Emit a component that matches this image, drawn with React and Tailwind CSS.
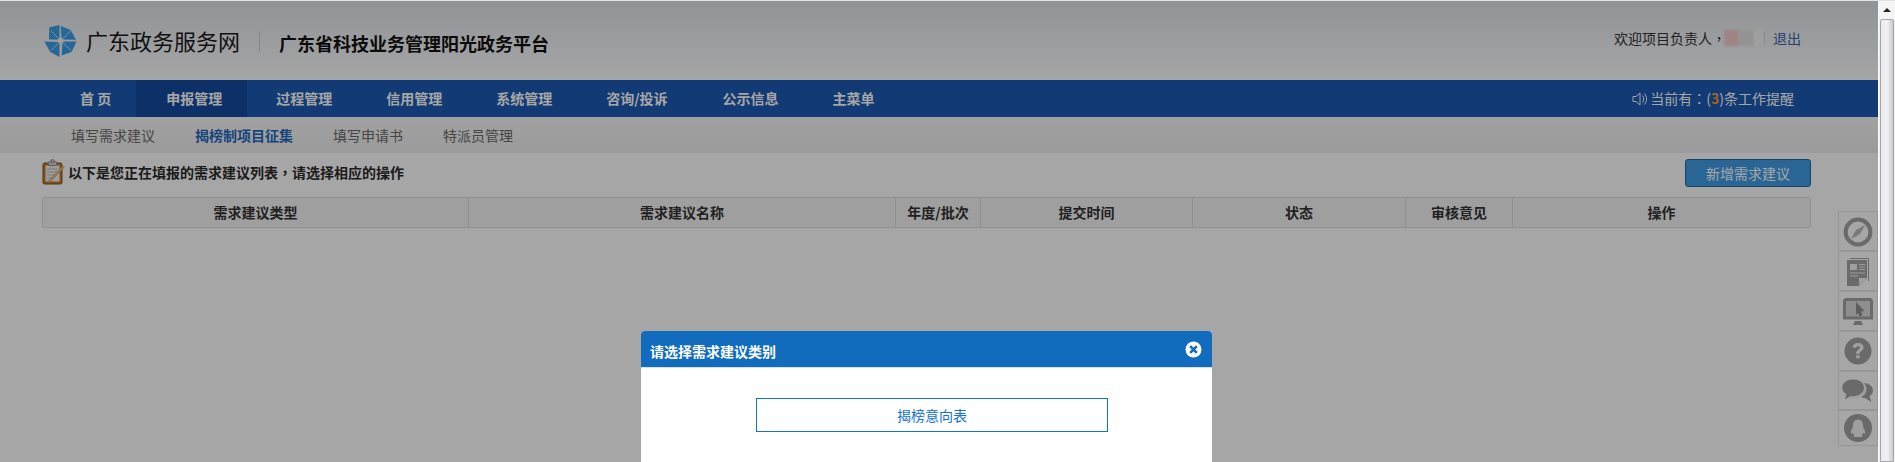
import React from "react";

const FONT = { fontFamily: '"Noto Sans CJK SC", "Liberation Sans", sans-serif' };
const PUNCT = { fontFamily: '"Noto Sans CJK TC", "Noto Sans CJK SC", sans-serif' };

const NAV = [
  { label: "首 页", cls: "pl-[29px] pr-[25px]" },
  { label: "申报管理", cls: "pl-[30px] pr-[25px] bg-[#134a9e]" },
  { label: "过程管理", cls: "pl-[29px] pr-[24px]" },
  { label: "信用管理", cls: "pl-[30px] pr-[24px]" },
  { label: "系统管理", cls: "pl-[30px] pr-[24px]" },
  { label: "咨询/投诉", cls: "pl-[30px] pr-[25px]" },
  { label: "公示信息", cls: "pl-[30px] pr-[24px]" },
  { label: "主菜单", cls: "pl-[30px] pr-[24px]" },
];

const COLS = [
  ["需求建议类型", "w-[426px]"],
  ["需求建议名称", "w-[427px]"],
  ["年度/批次", "w-[85px]"],
  ["提交时间", "w-[212px]"],
  ["状态", "w-[213px]"],
  ["审核意见", "w-[107px]"],
  ["操作", "flex-1"],
];

function Logo() {
  return (
    <svg width="34" height="34" viewBox="0 0 34 34" className="shrink-0">
      <path d="M5.3 3.3 L15.5 1 L15.5 15.6 L5 15.6Z" fill="#3c9ee6" />
      <path d="M16.7 2 L26.7 6 L32 15.8 L17.7 15.4Z" fill="#3c9ee6" />
      <path d="M18.5 17.6 L32.5 17.6 L27.7 27.7 L17.7 31.5Z" fill="#3c9ee6" />
      <path d="M15.5 18 L15.5 33 L6 27.7 L0.5 17.6Z" fill="#3c9ee6" />
      <path d="M7 7 L27 26.5 M26.5 7 L7 26.5" stroke="#fff" strokeOpacity="0.7" strokeWidth="1" fill="none" />
      <circle cx="16.6" cy="16.6" r="2.8" fill="#f0f4f8" />
    </svg>
  );
}

function Clipboard() {
  return (
    <svg width="24" height="26" viewBox="0 0 24 26" className="shrink-0 self-start">
      <rect x="1" y="4" width="19" height="21" rx="1.5" fill="#c07a30" stroke="#8a5318" />
      <rect x="3.5" y="6.5" width="14" height="16" fill="#f1f1ee" />
      <path d="M5 10h11M5 13h11M5 16h9M5 19h7" stroke="#bcbcbc" />
      <rect x="6.5" y="2.5" width="8" height="4" rx="1" fill="#cfcfcf" stroke="#8e8e8e" />
      <circle cx="10.5" cy="2" r="1.5" fill="#cfcfcf" stroke="#8e8e8e" />
      <path d="M22 8.5 L8 23 L6 24 L7 21.5 L20.5 7.5Z" fill="#ecc488" stroke="#b58443" strokeWidth="0.6" />
      <path d="M20.5 7.5 L22 8.5 L23 7.5 L22 6Z" fill="#d0d0d0" />
    </svg>
  );
}

const G = "#a3a3a3";
const S = "#f4f4f4";

function Compass() {
  return (
    <svg width="30" height="30" viewBox="0 0 30 30" className="mt-[1px]">
      <circle cx="15" cy="15" r="12.4" fill="none" stroke={G} strokeWidth="4" />
      <path d="M22 8 L17 17 L8 22 L13 13Z" fill={G} fillOpacity="0.75" />
    </svg>
  );
}
function Doc() {
  return (
    <svg width="24" height="30" viewBox="0 0 24 30" className="mt-[1px]">
      <path d="M4 1.5 H22.5 V24" fill="none" stroke={G} strokeWidth="1" />
      <path d="M1 3 H21 V21 L13 29 H1Z" fill={G} />
      <path d="M21 21 L13 29 V21Z" fill={S} />
      <rect x="4" y="7" width="7" height="6" fill={S} />
      <path d="M13 7.5h6M13 10h6M13 12.5h6M4 16h15M4 19h8" stroke={S} strokeWidth="1.2" />
    </svg>
  );
}
function Monitor() {
  return (
    <svg width="30" height="30" viewBox="0 0 30 30" className="mt-[3px]">
      <path d="M3.5 1.5 H26.5 Q28.5 1.5 28.5 3.5 V20 H1.5 V3.5 Q1.5 1.5 3.5 1.5Z" fill="#dadada" stroke={G} strokeWidth="3" />
      <path d="M12 23 H18 L20 27 H10Z" fill={G} />
      <path d="M13 4 L21.5 13 L18 13.5 L19.5 17 L16.5 18.5 L15 15 L13 17Z" fill="#8f8f8f" />
    </svg>
  );
}
function Question() {
  return (
    <svg width="28" height="28" viewBox="0 0 28 28">
      <circle cx="14" cy="14" r="13.5" fill={G} />
      <path d="M8.5 10.6 C8.8 7.4 11 6 14 6 C17.4 6 19.6 7.9 19.6 10.4 C19.6 12.6 18.1 13.6 16.9 14.4 C15.9 15.1 15.6 15.6 15.6 17 H12.2 C12.1 14.8 12.8 13.7 14.1 12.7 C15.2 11.9 15.9 11.4 15.9 10.6 C15.9 9.7 15.2 9.2 14 9.2 C12.8 9.2 12.1 9.9 12 11Z" fill={S} />
      <rect x="12.2" y="18.2" width="3.4" height="3.2" fill={S} />
    </svg>
  );
}
function Chat() {
  return (
    <svg width="32" height="25" viewBox="0 0 32 25" className="mt-[1px]">
      <path d="M21 4 C27 4 31 7.5 31 11.5 C31 14 29.6 16 27.5 17.3 L29.5 23 L22.5 18.8 Q21.5 19 20 19Z" fill={G} />
      <ellipse cx="12" cy="10" rx="12.5" ry="10" fill={S} />
      <path d="M11 0.5 C17 0.5 22 4 22 8.8 C22 13.6 17 17.2 11 17.2 Q9.5 17.2 8.5 17 L3 20.5 L4.5 15 C2 13.6 0.2 11.4 0.2 8.8 C0.2 4 5 0.5 11 0.5Z" fill={G} />
    </svg>
  );
}
function Penguin() {
  return (
    <svg width="28" height="28" viewBox="0 0 28 28">
      <circle cx="14" cy="14" r="14" fill={G} />
      <path d="M14 5.5 C17.5 5.5 19 8.5 19 11.5 C19 13 19.8 14 20.8 16.5 C21.6 18.6 21 20.2 20 19.8 L19.2 18.8 C18.9 20 18.2 20.8 17.6 21.4 C18.6 21.8 18.8 22.6 18 22.9 H10 C9.2 22.6 9.4 21.8 10.4 21.4 C9.8 20.8 9.1 20 8.8 18.8 L8 19.8 C7 20.2 6.4 18.6 7.2 16.5 C8.2 14 9 13 9 11.5 C9 8.5 10.5 5.5 14 5.5Z" fill={S} />
    </svg>
  );
}

function ToolBox({ children, cls }) {
  return (
    <div className={`flex items-center justify-center border border-[#e6e6e6] w-[40px] ${cls}`}>
      {children}
    </div>
  );
}

export default function App() {
  return (
    <div className="relative flex h-[462px] w-[1895px] overflow-hidden bg-white" style={FONT}>
      <div className="relative w-[1878px] shrink-0 text-[14px]">
        {/* header */}
        <div className="flex h-[80px] items-start bg-gradient-to-b from-[#dde2e8] to-white pl-[44px]">
          <div className="mt-[24px]"><Logo /></div>
          <div className="ml-[8px] mt-[22px] text-[22px] leading-[36px] text-[#1a1a1a]">广东政务服务网</div>
          <div className="ml-[19px] mt-[31px] h-[21px] w-px bg-[#d0d0d0]" />
          <div className="ml-[19px] mt-[29px] text-[18px] font-bold leading-[28px] text-[#111]">广东省科技业务管理阳光政务平台</div>
          <div className="ml-auto mr-[77px] mt-[27px] flex items-center leading-[22px] text-[#333]">
            <span>欢迎项目负责人<span style={PUNCT}>，</span></span>
            <span className="ml-[-2px] h-[16px] w-[15px] bg-[#f6cccc] blur-[1px]" />
            <span className="h-[16px] w-[15px] bg-[#e2e2e2] blur-[1px]" />
            <span className="h-[16px] w-[9px] bg-[#f4f4f4] blur-[1px]" />
            <span className="ml-[1px] h-[12px] w-px bg-[#cfcfcf]" />
            <span className="ml-[8px] text-[#3c64b0]">退出</span>
          </div>
        </div>

        {/* nav */}
        <div className="flex h-[37px] items-stretch bg-[#1c59b2] pl-[51px] leading-[37px] text-white">
          {NAV.map((n) => (
            <div key={n.label} className={`font-bold ${n.cls}`}>
              {n.label}
            </div>
          ))}
          <div className="ml-auto mr-[84px] flex items-center">
            <svg width="16" height="16" viewBox="0 0 16 16" className="mr-[2px]">
              <path d="M1 5.5h3l4-3.5v12l-4-3.5H1Z" fill="none" stroke="#fff" />
              <path d="M10.5 4.5c1.6 2 1.6 5 0 7M12.5 2.5c2.7 3.2 2.7 7.8 0 11" fill="none" stroke="#fff" />
            </svg>
            <span>当前有<span style={PUNCT}>：</span>(<span className="font-bold text-[#ff9428]">3</span>)条工作提醒</span>
          </div>
        </div>

        {/* subnav */}
        <div className="flex h-[36px] items-center bg-gradient-to-b from-[#f8f8f8] to-[#eeeeee] pl-[71px] text-[#6a6a6a]">
          <span>填写需求建议</span>
          <span className="ml-[40px] font-bold text-[#2468c0]">揭榜制项目征集</span>
          <span className="ml-[40px]">填写申请书</span>
          <span className="ml-[40px]">特派员管理</span>
        </div>

        {/* content */}
        <div className="ml-[42px] w-[1769px]">
          <div className="mt-[6px] flex h-[28px] items-center">
            <Clipboard />
            <span className="mb-[2px] ml-[2px] font-bold text-[#2b2b2b]">
              以下是您正在填报的需求建议列表<span style={PUNCT}>，</span>请选择相应的操作
            </span>
            <div className="ml-auto flex h-[28px] w-[126px] items-center justify-center rounded-[3px] border border-[#23679f] bg-[#3f9de6] text-white">
              新增需求建议
            </div>
          </div>
          <div className="mt-[10px] flex h-[31px] rounded-[2px] border border-[#dddddd] bg-[#f4f4f4] font-bold leading-[29px] text-[#333]">
            {COLS.map(([t, w], i) => (
              <div key={t} className={`${w} text-center ${i < COLS.length - 1 ? "border-r border-[#dddddd]" : ""}`}>{t}</div>
            ))}
          </div>
        </div>

        {/* side tools */}
        <div className="absolute left-[1838px] top-[211px] flex flex-col">
          <ToolBox cls="h-[40px]"><Compass /></ToolBox>
          <ToolBox cls="h-[40px]"><Doc /></ToolBox>
          <ToolBox cls="h-[40px]"><Monitor /></ToolBox>
          <ToolBox cls="h-[40px]"><Question /></ToolBox>
          <ToolBox cls="h-[39px]"><Chat /></ToolBox>
          <ToolBox cls="h-[36px]"><Penguin /></ToolBox>
        </div>

        {/* overlay */}
        <div className="absolute inset-0 bg-black/35" />

        {/* modal */}
        <div className="absolute left-[641px] top-[331px] h-[200px] w-[571px] overflow-hidden rounded-t-[4px] bg-white">
          <div className="flex h-[37px] items-center border-b border-[#d5e2ee] bg-[#116cbe] pl-[9px] pr-[10px] pt-[4px] font-bold text-white">
            <span>请选择需求建议类别</span>
            <svg width="17" height="17" viewBox="0 0 17 17" className="ml-auto mb-[4px]">
              <circle cx="8.5" cy="8.5" r="8" fill="#fff" />
              <path d="M5.2 5.2 L11.8 11.8 M11.8 5.2 L5.2 11.8" stroke="#116cbe" strokeWidth="2.6" />
            </svg>
          </div>
          <div className="ml-[115px] mt-[30px] flex h-[34px] w-[352px] items-center justify-center border border-[#1272d8] text-[#1272d8]">
            揭榜意向表
          </div>
        </div>
      </div>

      {/* scrollbar */}
      <div className="relative w-[17px] shrink-0 border-l border-[#f8f8f8] bg-[#f0f0f0]">
        <div className="flex h-[19px] items-center justify-center bg-[#f4f4f4]">
          <div className="h-0 w-0 border-x-[4px] border-b-[4px] border-x-transparent border-b-[#222]" />
        </div>
        <div className="mx-px h-[443px] rounded-t-[2px] border border-[#a8a8a8] bg-gradient-to-r from-[#e9e9ee] via-[#f1f1f4] to-[#c9c9d0]" />
      </div>

      {/* browser edge */}
      <div className="absolute inset-x-0 top-0 h-px bg-[#e2e2e2]" />
    </div>
  );
}
